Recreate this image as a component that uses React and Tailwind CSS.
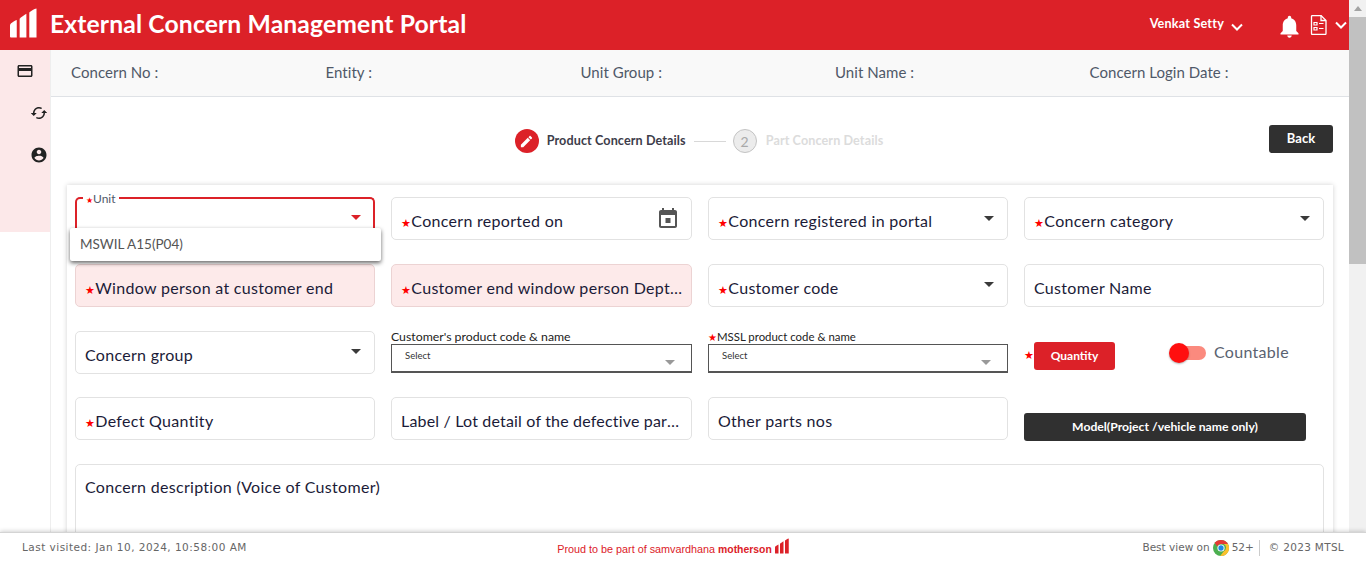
import React from 'react';

const RED = 'bg-[#dc2128]';

const Star = ({ className = 'text-[11px]' }) => (
  <span className={`text-[#ff0000] ${className}`}>★</span>
);

const MatIcon = ({ d, className }) => (
  <svg viewBox="0 0 24 24" fill="currentColor" className={className}>
    <path d={d} />
  </svg>
);

const Chevron = ({ className }) => (
  <svg viewBox="0 0 12 8" fill="none" stroke="currentColor" strokeWidth="2" className={className}>
    <path d="M1 1.500l5 5 5-5" />
  </svg>
);

const Caret = ({ className = 'text-[#3a3a3a]' }) => (
  <svg viewBox="0 0 10 5" fill="currentColor" className={`w-[10px] h-[5px] ${className}`}>
    <path d="M0 0h10L5 5z" />
  </svg>
);

const Logo = ({ className }) => (
  <svg viewBox="0 0 28 30" fill="currentColor" className={className}>
    <path d="M0 17.500c0-1.500 3-4 7-5.500v18H1a1 1 0 0 1-1-1z" />
    <path d="M10 10.500c2-1.600 5-4 7-5v24.500h-7z" />
    <path d="M20 4c2-1.600 5-3.500 7.500-4v30H20z" />
  </svg>
);

// Plain outlined field used by most of the form
const Field = ({ label, required, pink, caret, icon, tight }) => (
  <div
    className={`h-[43px] rounded-[5px] border flex items-center pl-[9px] pt-[5px] ${
      caret || icon ? 'pr-[13px]' : 'pr-[9px]'
    } ${pink ? 'bg-[#fdeaea] border-[#ecd3d3]' : 'bg-white border-[#e2e2e2]'}`}
  >
    <span className={`flex-1 min-w-0 truncate text-[16px] text-[#1b1b38] ${tight ? 'tracking-[0.18px]' : 'tracking-[0.3px]'}`}>
      {required && <Star />}
      {label}
    </span>
    {caret && <Caret className="text-[#3a3a3a] ml-2 -mt-[6px]" />}
    {icon}
  </div>
);

const SelectField = ({ label, required, labelClass }) => (
  <div className="h-[43px] -mt-[1px] flex flex-col justify-end">
    <span className={`leading-[14px] text-[#222] ${labelClass}`}>
      {required && <Star className="text-[10px]" />}
      {label}
    </span>
    <div className="h-[30px] border border-[#555] border-b-2 flex items-center justify-between pl-[13px] pr-[16px]">
      <span className="text-[9.5px] -mt-[3px] text-[#333]">Select</span>
      <Caret className="text-[#999] mt-[9px]" />
    </div>
  </div>
);

const App = () => {
  return (
    <div className="relative h-screen w-full overflow-hidden flex bg-white font-['Lato',sans-serif]">
      <div className="flex-1 min-w-0 flex flex-col">
        <header className={`h-[50px] shrink-0 flex items-center text-white ${RED}`}>
          <div className="w-[50px] h-full flex items-center justify-center pr-[3px]">
            <Logo className="w-[27px] h-[30px] -mt-[4px] text-white" />
          </div>
          <h1 className="text-[24.7px] font-bold tracking-[0.13px] leading-none -mt-[2px]">External Concern Management Portal</h1>
          <div className="ml-auto flex items-center">
            <span className="text-[12.6px] font-bold tracking-[0.2px] -mt-[2px]">Venkat Setty</span>
            <Chevron className="w-[12px] h-[8px] ml-[7px] mt-[3px]" />
            <MatIcon
              className="w-[27px] h-[27px] ml-[33px] mt-[3px]"
              d="M12 22c1.100 0 2-.9 2-2h-4c0 1.100.89 2 2 2zm6-6v-5c0-3.070-1.640-5.640-4.500-6.320V4c0-.83-.67-1.500-1.500-1.500s-1.500.67-1.500 1.500v.68C7.630 5.360 6 7.920 6 11v5l-2 2v1h16v-1l-2-2z"
            />
            <svg viewBox="0 0 17 20" fill="none" stroke="currentColor" strokeWidth="1.300" className="w-[17px] h-[20px] ml-[7px]">
              <path d="M1.500 1.500a1 1 0 0 1 1-1H11l5 5v13a1 1 0 0 1-1 1H2.500a1 1 0 0 1-1-1z" />
              <path d="M11 .5v5h5" />
              <path d="M4 7.500h3v2.500H4zM4 12.500h3V15H4zM9 8.500h4.500M9 13.500h4.500" strokeWidth="1.200" />
            </svg>
            <Chevron className="w-[12px] h-[8px] ml-[8px] mr-[2px]" />
          </div>
        </header>

        <div className="flex flex-1 min-h-0">
          <aside className="w-[50px] h-[182px] shrink-0 bg-[#fce8e9] text-[#222] flex flex-col">
            <MatIcon
              className="w-[18px] h-[18px] ml-[16px] mt-[12px]"
              d="M20 4H4c-1.110 0-1.990.89-1.990 2L2 18c0 1.110.89 2 2 2h16c1.110 0 2-.89 2-2V6c0-1.110-.89-2-2-2zm0 14H4v-6h16v6zm0-10H4V6h16v2z"
            />
            <MatIcon
              className="w-[18px] h-[18px] ml-[30px] mt-[24px] rotate-90"
              d="M12 4V1L8 5l4 4V6c3.310 0 6 2.690 6 6 0 1.010-.25 1.970-.7 2.800l1.460 1.460C19.540 15.030 20 13.570 20 12c0-4.420-3.580-8-8-8zm0 14c-3.310 0-6-2.690-6-6 0-1.010.25-1.970.7-2.800L5.240 7.740C4.460 8.970 4 10.430 4 12c0 4.420 3.580 8 8 8v3l4-4-4-4v3z"
            />
            <MatIcon
              className="w-[18px] h-[18px] ml-[30px] mt-[24px]"
              d="M12 2C6.480 2 2 6.480 2 12s4.480 10 10 10 10-4.480 10-10S17.520 2 12 2zm0 3c1.660 0 3 1.340 3 3s-1.340 3-3 3-3-1.340-3-3 1.340-3 3-3zm0 14.200c-2.500 0-4.710-1.280-6-3.220.03-1.990 4-3.080 6-3.080 1.990 0 5.970 1.090 6 3.080-1.290 1.940-3.500 3.220-6 3.220z"
            />
          </aside>

          <main className="flex-1 min-w-0 border-l border-[#eeeeee]">
            <div className="h-[47px] bg-[#f9f9f9] border-b border-[#dfe2e6] grid grid-cols-[254.5px_255px_254.5px_254.5px_1fr] items-center pl-[20px] pb-[2px] text-[15px] tracking-[0.05px] text-[#4f5868]">
              <span>Concern No :</span>
              <span>Entity :</span>
              <span>Unit Group :</span>
              <span>Unit Name :</span>
              <span>Concern Login Date :</span>
            </div>

            <div className="relative h-[88px] flex items-start justify-center pt-[32px] pr-[2px]">
              <div className="flex items-center text-[12.6px] font-bold tracking-[0.1px]">
                <span className={`w-[24px] h-[24px] rounded-full flex items-center justify-center text-white ${RED}`}>
                  <MatIcon
                    className="w-[15px] h-[15px]"
                    d="M3 17.250V21h3.750L17.810 9.940l-3.750-3.750L3 17.250zM20.710 7.040c.39-.39.39-1.020 0-1.410l-2.340-2.340c-.39-.39-1.020-.39-1.410 0l-1.830 1.830 3.750 3.750 1.830-1.830z"
                  />
                </span>
                <span className="ml-[8px] text-[#3d3d4a]">Product Concern Details</span>
                <span className="w-[32px] h-px bg-[#d8d8d8] ml-[8px]" />
                <span className="w-[24px] h-[24px] ml-[7px] rounded-full border border-[#c4c4c4] bg-[#ececec] flex items-center justify-center font-normal text-[14px] text-[#a9a9a9]">
                  2
                </span>
                <span className="ml-[9px] text-[#dcdcdc]">Part Concern Details</span>
              </div>
              <button className="absolute right-[16px] top-[28px] w-[64px] h-[28px] rounded-[3px] bg-[#303030] text-white text-[13px] font-bold">
                Back
              </button>
            </div>

            <div className="relative ml-[16px] mr-[16px] bg-white shadow-[0_0_5px_rgba(0,0,0,0.18)] pl-[8px] pr-[9px] pt-[12.33px] h-[400px]">
              <div className="grid grid-cols-[300px_301px_300px_300px] gap-x-[16px] gap-y-[23.67px]">
                {/* floating label select, open */}
                <div className="relative h-[43px] rounded-[5px] border-2 border-[#dc2128] border-b-0 flex items-start justify-end pr-[12px] pt-[16px]">
                  <span className="absolute left-[6px] -top-[7px] bg-white px-[3px] text-[12px] leading-[14px] text-[#4f5868]">
                    <Star className="text-[8px]" />Unit
                  </span>
                  <Caret className="text-[#dc2128]" />
                </div>
                <Field
                  label="Concern reported on"
                  required
                  icon={
                    <MatIcon
                      className="w-[24px] h-[24px] text-[#555] -mr-[2px] -mt-[5px]"
                      d="M19 3h-1V1h-2v2H8V1H6v2H5c-1.110 0-1.990.9-1.990 2L3 19c0 1.100.89 2 2 2h14c1.100 0 2-.9 2-2V5c0-1.100-.9-2-2-2zm0 16H5V8h14v11zM9.500 11h5v5h-5z"
                    />
                  }
                />
                <Field label="Concern registered in portal" required caret />
                <Field label="Concern category" required caret />

                <Field label="Window person at customer end" required pink />
                <Field label="Customer end window person Dept name" required pink />
                <Field label="Customer code" required caret />
                <Field label="Customer Name" />

                <Field label="Concern group" caret />
                <SelectField label="Customer's product code & name" labelClass="text-[12.3px]" />
                <SelectField label="MSSL product code & name" required labelClass="text-[11.4px]" />
                <div className="flex items-center h-[43px]">
                  <Star className="text-[11px] mt-[7px]" />
                  <button className={`mt-[7px] w-[81px] h-[28px] rounded-[3px] text-white text-[12px] font-bold ${RED}`}>
                    Quantity
                  </button>
                  <span className="relative ml-[55px] w-[36px] h-[14px] mt-[1px] rounded-full bg-[#fb8a7e]">
                    <span className="absolute -left-px -top-[3px] w-[20px] h-[20px] rounded-full bg-[#ff0f0f] shadow-[0_1px_2px_rgba(0,0,0,0.3)]" />
                  </span>
                  <span className="ml-[8px] -mt-[1px] text-[16px] tracking-[0.3px] text-[#5a6270]">Countable</span>
                </div>

                <Field label="Defect Quantity" required />
                <Field label="Label / Lot detail of the defective part numbers" tight />
                <Field label="Other parts nos" />
                <div className="flex items-end h-[43px]">
                  <button className="w-[282px] h-[28px] -mb-[1px] rounded-[3px] bg-[#303030] text-white text-[12.2px] font-bold">
                    Model(Project /vehicle name only)
                  </button>
                </div>
              </div>

              <div className="mt-[24px] h-[110px] rounded-[5px] border border-[#e2e2e2] px-[9px] pt-[10px] text-[16px] tracking-[0.3px] text-[#1b1b38]">
                Concern description (Voice of Customer)
              </div>

              {/* open dropdown of the Unit select */}
              <div className="absolute left-[3px] top-[43px] w-[311px] h-[33px] bg-white rounded-[2px] shadow-[0_2px_4px_rgba(0,0,0,0.6)] flex items-center pl-[10px] text-[13.5px] text-[#555]">
                MSWIL A15(P04)
              </div>
            </div>
          </main>
        </div>
      </div>

      {/* scrollbar */}
      <div className="w-[17px] shrink-0 bg-[#f1f1f1] flex flex-col items-center">
        <svg viewBox="0 0 8 5" fill="currentColor" className="w-[8px] h-[5px] mt-[6px] text-[#a3a3a3]">
          <path d="M4 0l4 5H0z" />
        </svg>
        <div className="w-full h-[247px] mt-[6px] bg-[#c1c1c1]" />
      </div>

      {/* fixed footer */}
      <footer className="absolute left-0 right-0 bottom-0 h-[30px] bg-white border-t border-[#d4d4d4] shadow-[0_-1px_4px_rgba(0,0,0,0.18)] flex items-center justify-between pl-[22px] pr-[22px] font-['DejaVu_Sans',sans-serif] text-[10.5px] text-[#666]">
        <span className="w-[330px] tracking-[0.47px]">Last visited: Jan 10, 2024, 10:58:00 AM</span>
        <span className="flex items-center text-[#dc2128] text-[10.8px] font-['Liberation_Sans',sans-serif]">
          <span className="mt-[3px]">
            Proud to be part of samvardhana&nbsp;<b className="text-[10.4px]">motherson</b>
          </span>
          <Logo className="w-[14px] h-[16px] ml-[3px] -mt-[2px] text-[#dc2128]" />
        </span>
        <span className="w-[350px] flex items-center justify-end">
          Best view on
          <svg viewBox="0 0 20 20" className="w-[16px] h-[16px] ml-[3px]">
            <circle cx="10" cy="10" r="10" fill="#4caf50" />
            <path d="M10 0a10 10 0 0 1 8.700 5H10a5 5 0 0 0-4.700 3L2 3.500A10 10 0 0 1 10 0z" fill="#e53935" />
            <path d="M18.700 5A10 10 0 0 1 9 20l4.500-6a5 5 0 0 0 0-9z" fill="#fbc02d" />
            <circle cx="10" cy="10" r="4.500" fill="#fff" />
            <circle cx="10" cy="10" r="3.300" fill="#1e88e5" />
          </svg>
          <span className="ml-[3px]">52+</span>
          <span className="w-px h-[16px] bg-[#ccc] ml-[5px] mr-[9px]" />
          <span className="tracking-[0.3px]">© 2023 MTSL</span>
        </span>
      </footer>
    </div>
  );
};

export default App;
